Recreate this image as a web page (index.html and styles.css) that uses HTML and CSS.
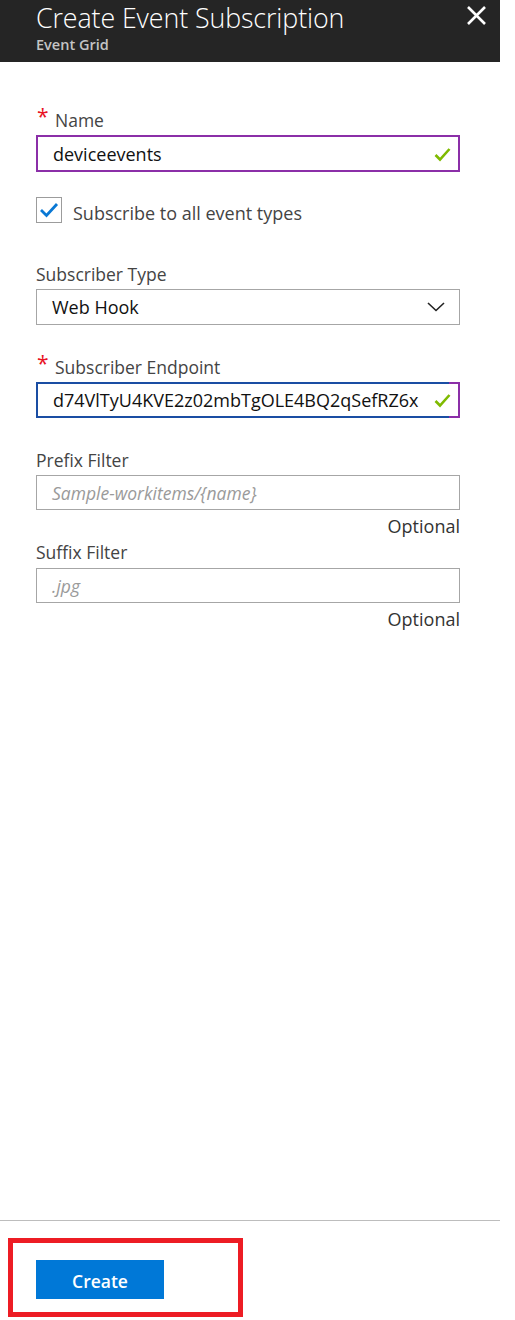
FILE: index.html
```html
<!DOCTYPE html>
<html>
<head>
<meta charset="utf-8">
<link rel="stylesheet" href="styles.css">
</head>
<body>
<div class="panel">
  <header class="header">
    <div class="titles">
      <div class="title">Create Event Subscription</div>
      <div class="subtitle">Event Grid</div>
    </div>
    <button class="close" aria-label="Close">
      <svg width="21" height="21" viewBox="0 0 21 21"><path d="M2 2 L19 19 M19 2 L2 19" stroke="#fff" stroke-width="2.6" fill="none"/></svg>
    </button>
  </header>
  <main class="form">
    <div class="field f-name">
      <div class="label"><span class="req">*</span>Name</div>
      <div class="input valid">
        <span class="value">deviceevents</span>
        <svg class="ok" width="17" height="15" viewBox="0 0 17 15"><path d="M1.5 8 L6 12.5 L15.5 2" stroke="#7fba00" stroke-width="2.6" fill="none"/></svg>
      </div>
    </div>
    <label class="check-row">
      <span class="checkbox">
        <svg width="20" height="16" viewBox="0 0 20 16"><path d="M2 8 L7.5 13.5 L18 2" stroke="#0a78d4" stroke-width="2.8" fill="none"/></svg>
      </span>
      <span class="check-text">Subscribe to all event types</span>
    </label>
    <div class="field f-type">
      <div class="label">Subscriber Type</div>
      <div class="input select">
        <span class="value">Web Hook</span>
        <svg class="chev" width="18" height="10" viewBox="0 0 18 10"><path d="M1 1 L9 8.5 L17 1" stroke="#222" stroke-width="1.6" fill="none"/></svg>
      </div>
    </div>
    <div class="field f-endpoint">
      <div class="label"><span class="req">*</span>Subscriber Endpoint</div>
      <div class="input focused">
        <span class="value">d74VlTyU4KVE2z02mbTgOLE4BQ2qSefRZ6x</span>
        <svg class="ok" width="17" height="15" viewBox="0 0 17 15"><path d="M1.5 8 L6 12.5 L15.5 2" stroke="#7fba00" stroke-width="2.6" fill="none"/></svg>
      </div>
    </div>
    <div class="field f-prefix">
      <div class="label">Prefix Filter</div>
      <div class="input plain"><span class="placeholder">Sample-workitems/{name}</span></div>
      <div class="hint">Optional</div>
    </div>
    <div class="field f-suffix">
      <div class="label">Suffix Filter</div>
      <div class="input plain"><span class="placeholder">.jpg</span></div>
      <div class="hint">Optional</div>
    </div>
  </main>
  <footer class="footer">
    <div class="highlight">
      <button class="create">Create</button>
    </div>
  </footer>
</div>
</body>
</html>
```

FILE: styles.css
```css
* { box-sizing: border-box; }
html, body { margin: 0; padding: 0; background: #fff; }
body { font-family: "Open Sans", "Noto Sans", sans-serif; }

.panel {
  width: 500px;
  height: 1320px;
  display: flex;
  flex-direction: column;
}

.header {
  height: 62px;
  background: #252525;
  display: flex;
  justify-content: space-between;
  align-items: flex-start;
  padding: 0 13px 0 36px;
}
.title {
  color: #fff;
  font-weight: 300;
  font-size: 26.8px;
  line-height: 32px;
  margin-top: 2px;
  letter-spacing: -0.1px;
}
.subtitle {
  color: #c4c4c4;
  font-weight: 600;
  font-size: 14.5px;
  line-height: 20px;
  margin-top: 1px;
}
.close {
  background: none;
  border: 0;
  padding: 0;
  margin-top: 5px;
  width: 21px;
  height: 21px;
  display: flex;
}

.form {
  flex: 1;
  padding: 0 40px 0 36px;
  display: flex;
  flex-direction: column;
}

.field { display: flex; flex-direction: column; }
.label {
  color: #444;
  font-size: 17.5px;
  line-height: 22px;
  height: 22px;
  margin-bottom: 4px;
  display: flex;
  align-items: flex-start;
}
.req {
  color: #e81123;
  font-size: 21px;
  line-height: 20px;
  width: 18px;
  margin-left: 1px;
  margin-top: -3px;
}

.input {
  height: 37px;
  border: 1.5px solid #a6a6a6;
  display: flex;
  align-items: center;
  justify-content: space-between;
  padding: 0 7px 0 15px;
  font-size: 18px;
  color: #111;
}
.input.valid { border: 2px solid #8b2fa8; }
.input.focused {
  border: 2px solid;
  border-image: linear-gradient(to right, #1a4ea3 0, #1a4ea3 414px, #8b2fa8 414px) 1;
  height: 36px;
}
.input.select { height: 36px; padding-right: 14px; }
.input.plain { height: 35px; }
.ok { margin-top: 1px; }
.placeholder { color: #9a9a9a; font-style: italic; font-size: 17.5px; }

.f-name { margin-top: 47px; }

.check-row {
  margin-top: 25px;
  display: flex;
  align-items: center;
  height: 26px;
}
.checkbox {
  width: 26px;
  height: 26px;
  border: 1.5px solid #9c9c9c;
  display: flex;
  align-items: center;
  justify-content: center;
}
.check-text {
  margin-left: 11px;
  color: #444;
  font-size: 18px;
  margin-top: 5px;
}

.f-type { margin-top: 40px; }
.f-endpoint { margin-top: 31px; }
.f-prefix { margin-top: 31px; }
.f-suffix { margin-top: 5px; }
.hint {
  text-align: right;
  color: #333;
  font-size: 18px;
  line-height: 20px;
  margin-top: 6px;
}
.f-suffix .label { margin-bottom: 5px; }

.footer {
  border-top: 1.5px solid #bdbdbd;
  height: 100px;
  padding-top: 17px;
  padding-left: 8px;
}
.highlight {
  width: 235px;
  height: 79px;
  border: 5px solid #ed1c24;
  padding: 17px 0 0 23px;
}
.create {
  width: 128px;
  height: 39px;
  background: #0078d7;
  color: #fff;
  border: 0;
  font-family: "Open Sans", "Noto Sans", sans-serif;
  font-size: 17.5px;
  font-weight: 600;
  padding: 3px 0 0;
}
```
